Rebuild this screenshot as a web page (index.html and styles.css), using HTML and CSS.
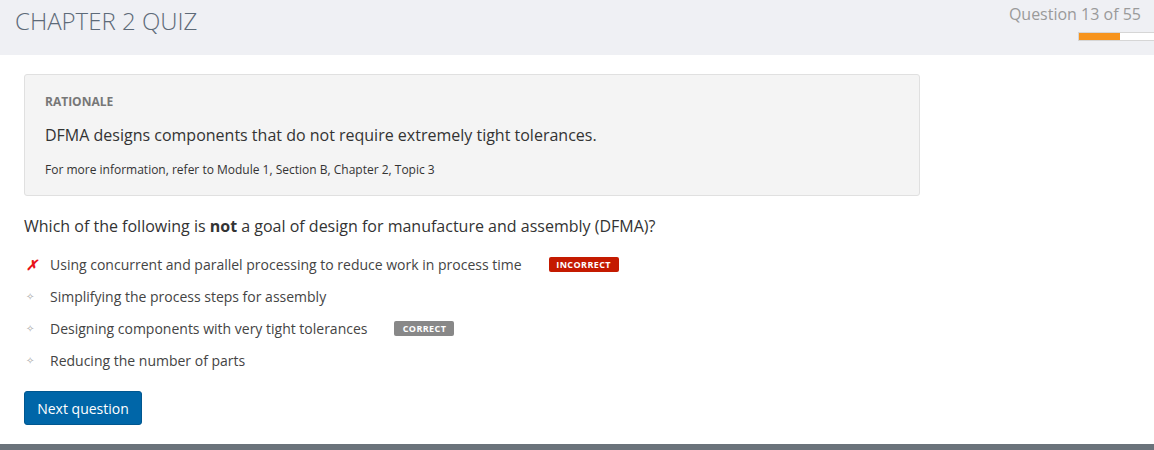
FILE: index.html
```html
<!DOCTYPE html>
<html>
<head>
<meta charset="utf-8">
<link rel="stylesheet" href="styles.css">
</head>
<body>
<header class="top">
  <h1 class="title">CHAPTER 2 QUIZ</h1>
  <div class="status">
    <div class="count">Question 13 of 55</div>
    <div class="progress"><div class="fill" style="width:54%"></div></div>
  </div>
</header>
<main class="content">
  <section class="rationale">
    <div class="r-label">RATIONALE</div>
    <p class="r-text">DFMA designs components that do not require extremely tight tolerances.</p>
    <p class="r-ref">For more information, refer to Module 1, Section B, Chapter 2, Topic 3</p>
  </section>
  <p class="question">Which of the following is <b>not</b> a goal of design for manufacture and assembly (DFMA)?</p>
  <ul class="options">
    <li class="opt"><span class="mark wrong">✗</span><span class="otext">Using concurrent and parallel processing to reduce work in process time</span><span class="badge bad">INCORRECT</span></li>
    <li class="opt"><span class="mark dot">✧</span><span class="otext">Simplifying the process steps for assembly</span></li>
    <li class="opt"><span class="mark dot">✧</span><span class="otext">Designing components with very tight tolerances</span><span class="badge good">CORRECT</span></li>
    <li class="opt"><span class="mark dot">✧</span><span class="otext">Reducing the number of parts</span></li>
  </ul>
  <button class="next">Next question</button>
</main>
<footer class="bottom"></footer>
</body>
</html>
```
FILE: styles.css
```css
* { box-sizing: border-box; }
html, body { margin: 0; padding: 0; }
body {
  font-family: "Open Sans", "Liberation Sans", sans-serif;
  color: #333;
  background: #fff;
  width: 1154px;
  height: 450px;
  overflow: hidden;
  display: flex;
  flex-direction: column;
}
.top {
  height: 55px;
  background: #eff0f4;
  display: flex;
  justify-content: space-between;
  padding-left: 15px;
}
.title {
  margin: 0;
  padding-top: 4px;
  font-weight: 300;
  font-size: 24px;
  line-height: 34px;
  color: #5d6a78;
}
.status {
  display: flex;
  flex-direction: column;
  align-items: flex-end;
  padding-top: 4px;
  padding-right: 13px;
  position: relative;
}
.count {
  font-size: 16px;
  line-height: 20px;
  color: #9a9a9a;
}
.progress {
  position: absolute;
  right: 0;
  top: 32px;
  width: 76px;
  height: 9px;
  background: #fff;
  border: 1px solid #d6d6d6;
  border-right: none;
}
.fill {
  height: 100%;
  background: #f7941d;
}
.content {
  flex: 1;
  padding: 19px 0 0 24px;
}
.rationale {
  width: 896px;
  height: 122px;
  background: #f4f4f4;
  border: 1px solid #e0e0e0;
  border-radius: 3px;
  padding: 19px 20px 0 20px;
}
.r-label {
  font-size: 12px;
  font-weight: 700;
  color: #777;
  line-height: 16px;
}
.r-text {
  margin: 14px 0 0 0;
  font-size: 16px;
  line-height: 22px;
  color: #333;
}
.r-ref {
  margin: 16px 0 0 0;
  font-size: 12px;
  line-height: 16px;
  color: #333;
}
.question {
  margin: 18px 0 0 0;
  font-size: 16px;
  line-height: 24px;
  color: #333;
}
.question b { font-weight: 700; }
.options {
  list-style: none;
  margin: 10px 0 0 0;
  padding: 0;
}
.opt {
  display: flex;
  align-items: center;
  height: 32px;
  font-size: 14px;
  color: #444;
}
.mark {
  width: 26px;
  padding-left: 2px;
  font-size: 12px;
}
.wrong {
  color: #e8141a;
  font-weight: 700;
  font-style: italic;
  font-size: 14px;
}
.dot {
  color: #aaa;
  font-size: 10px;
}
.badge {
  display: inline-block;
  font-size: 9px;
  font-weight: 700;
  letter-spacing: 0.4px;
  color: #fff;
  height: 15px;
  line-height: 15px;
  border-radius: 2px;
  text-align: center;
}
.bad {
  background: #c41a00;
  width: 70px;
  margin-left: 27px;
}
.good {
  background: #888;
  width: 60px;
  margin-left: 27px;
}
.next {
  margin-top: 15px;
  width: 118px;
  height: 34px;
  background: #0066a8;
  border: 1px solid #005790;
  border-radius: 3px;
  color: #fff;
  font-family: "Open Sans", "Liberation Sans", sans-serif;
  font-size: 14px;
  font-weight: 400;
  padding: 0;
}
.bottom {
  height: 6px;
  background: #6b737b;
}
```
